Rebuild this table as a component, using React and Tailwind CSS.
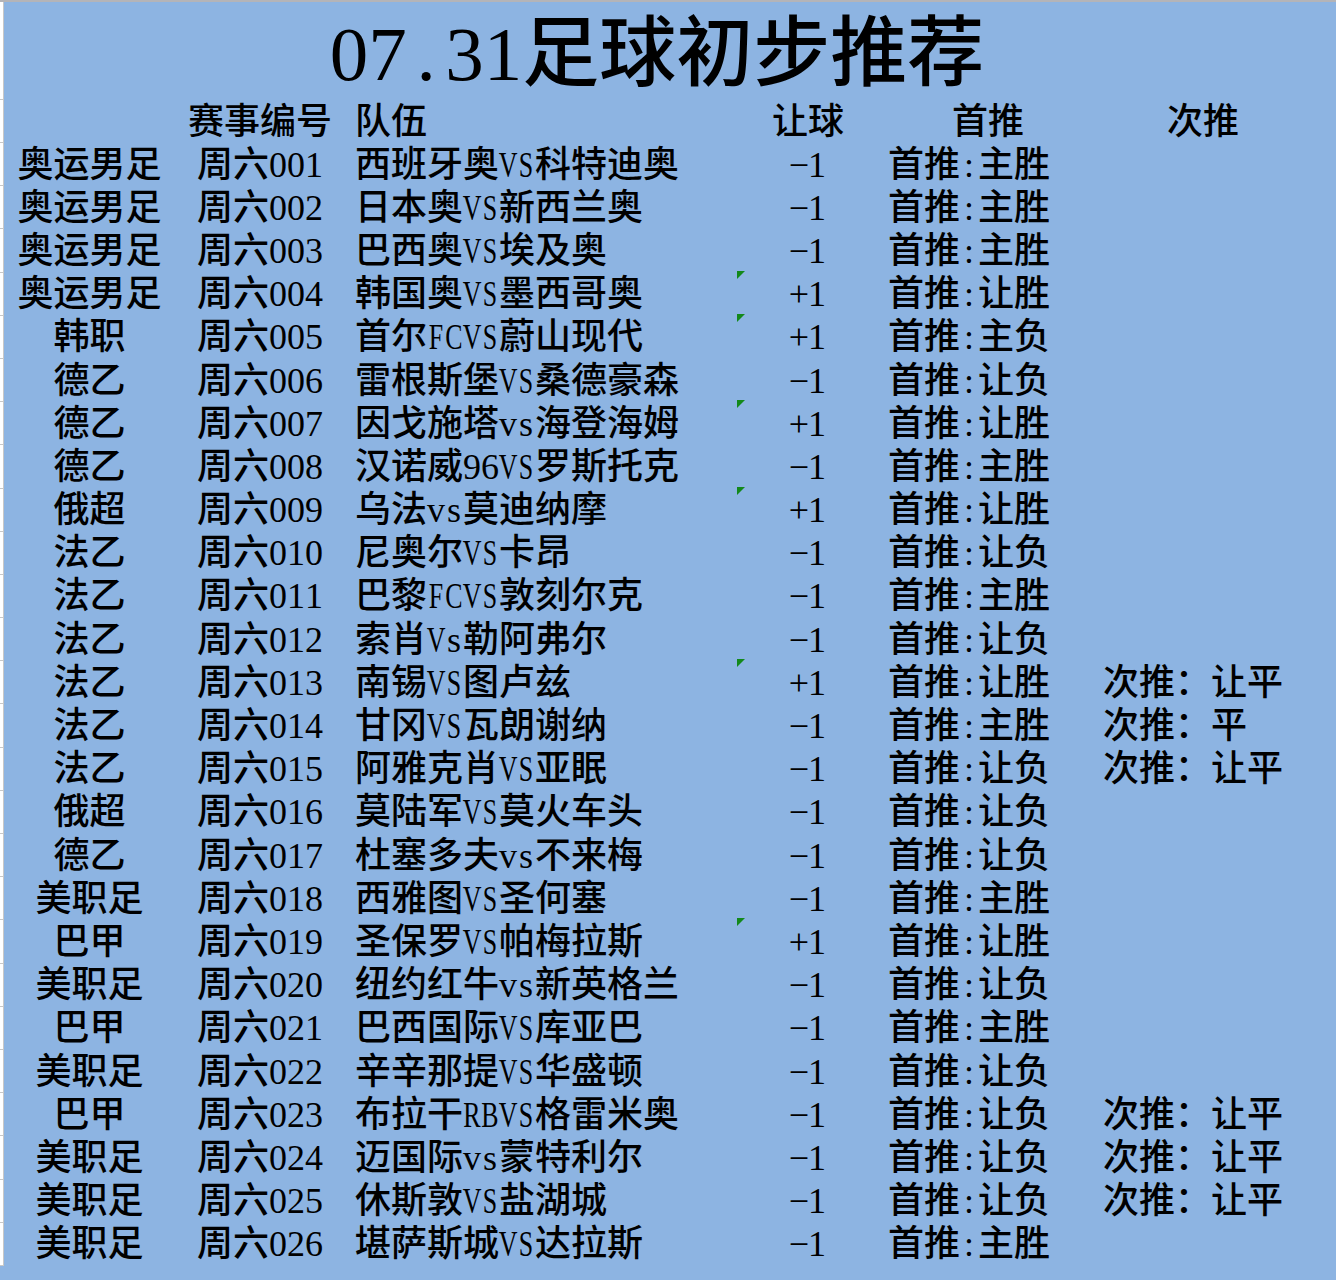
import React from 'react';

const rows = [
  ['奥运男足', '周六001', '西班牙奥VS科特迪奥', '-1', '主胜'],
  ['奥运男足', '周六002', '日本奥VS新西兰奥', '-1', '主胜'],
  ['奥运男足', '周六003', '巴西奥VS埃及奥', '-1', '主胜'],
  ['奥运男足', '周六004', '韩国奥VS墨西哥奥', '+1', '让胜'],
  ['韩职', '周六005', '首尔FCVS蔚山现代', '+1', '主负'],
  ['德乙', '周六006', '雷根斯堡VS桑德豪森', '-1', '让负'],
  ['德乙', '周六007', '因戈施塔vs海登海姆', '+1', '让胜'],
  ['德乙', '周六008', '汉诺威96VS罗斯托克', '-1', '主胜'],
  ['俄超', '周六009', '乌法vs莫迪纳摩', '+1', '让胜'],
  ['法乙', '周六010', '尼奥尔VS卡昂', '-1', '让负'],
  ['法乙', '周六011', '巴黎FCVS敦刻尔克', '-1', '主胜'],
  ['法乙', '周六012', '索肖Vs勒阿弗尔', '-1', '让负'],
  ['法乙', '周六013', '南锡VS图卢兹', '+1', '让胜', '让平'],
  ['法乙', '周六014', '甘冈VS瓦朗谢纳', '-1', '主胜', '平'],
  ['法乙', '周六015', '阿雅克肖VS亚眠', '-1', '让负', '让平'],
  ['俄超', '周六016', '莫陆军VS莫火车头', '-1', '让负'],
  ['德乙', '周六017', '杜塞多夫vs不来梅', '-1', '让负'],
  ['美职足', '周六018', '西雅图VS圣何塞', '-1', '主胜'],
  ['巴甲', '周六019', '圣保罗VS帕梅拉斯', '+1', '让胜'],
  ['美职足', '周六020', '纽约红牛vs新英格兰', '-1', '让负'],
  ['巴甲', '周六021', '巴西国际VS库亚巴', '-1', '主胜'],
  ['美职足', '周六022', '辛辛那提VS华盛顿', '-1', '让负'],
  ['巴甲', '周六023', '布拉干RBVS格雷米奥', '-1', '让负', '让平'],
  ['美职足', '周六024', '迈国际vs蒙特利尔', '-1', '让负', '让平'],
  ['美职足', '周六025', '休斯敦VS盐湖城', '-1', '让负', '让平'],
  ['美职足', '周六026', '堪萨斯城VS达拉斯', '-1', '主胜'],
];

// half-width latin chars, like the sheet's song-style font
function T({ s }) {
  return (
    <>
      {s.split('').map((c, i) => {
        if (c.charCodeAt(0) >= 128) return <span key={i}>{c}</span>;
        const upper = c >= 'A' && c <= 'Z';
        return (
          <span key={i} className="inline-flex w-[0.5em] justify-center">
            <span className={upper ? 'inline-block scale-x-[0.72]' : 'inline-block'}>
              {c === '-' ? '−' : c}
            </span>
          </span>
        );
      })}
    </>
  );
}

const grid = 'grid grid-cols-[4px_171px_170px_391px_144px_216px_1fr]';
const strip = 'bg-white border-r border-b border-[#c8c8c8]';

export default function App() {
  return (
    <div
      className="w-[1336px] h-[1280px] bg-[#8db4e2] border-t-2 border-[#b4b4b8] text-black overflow-hidden"
      style={{ fontFamily: '"Liberation Serif", "Noto Sans CJK SC", serif' }}
    >
      <div className={`${grid} h-[98px]`}>
        <div className={strip} />
        <div className="col-span-6 flex items-center justify-center pt-[6px] pr-[26px] text-[77px] leading-none font-medium">
          <T s="07.31足球初步推荐" />
        </div>
      </div>

      <div className={`${grid} h-[43px] text-[36px] leading-none font-medium`}>
        <div className={strip} />
        <div />
        <div className="flex items-center justify-center">赛事编号</div>
        <div className="flex items-center pl-[10px]">队伍</div>
        <div className="flex items-center justify-center">让球</div>
        <div className="flex items-center justify-center">首推</div>
        <div className="flex items-center justify-center pr-[26px]">次推</div>
      </div>

      {rows.map((r, i) => (
        <div key={i} className={`${grid} h-[43.2px] text-[36px] leading-none font-medium`}>
          <div className={strip} />
          <div className="flex items-center justify-center">{r[0]}</div>
          <div className="flex items-center justify-center">
            <T s={r[1]} />
          </div>
          <div className="flex items-center pl-[10px] whitespace-nowrap">
            <T s={r[2]} />
          </div>
          <div className="relative flex items-center justify-center">
            {r[3] === '+1' && (
              <div className="absolute left-[1px] top-[-2px] w-0 h-0 border-t-[8px] border-t-[#13891b] border-r-[8px] border-r-transparent" />
            )}
            <T s={r[3]} />
          </div>
          <div className="flex items-center pl-[8px] whitespace-nowrap">
            首推<T s=":" />{r[4]}
          </div>
          <div className="flex items-center pl-[7px] whitespace-nowrap">
            {r[5] && <>次推：{r[5]}</>}
          </div>
        </div>
      ))}
    </div>
  );
}
